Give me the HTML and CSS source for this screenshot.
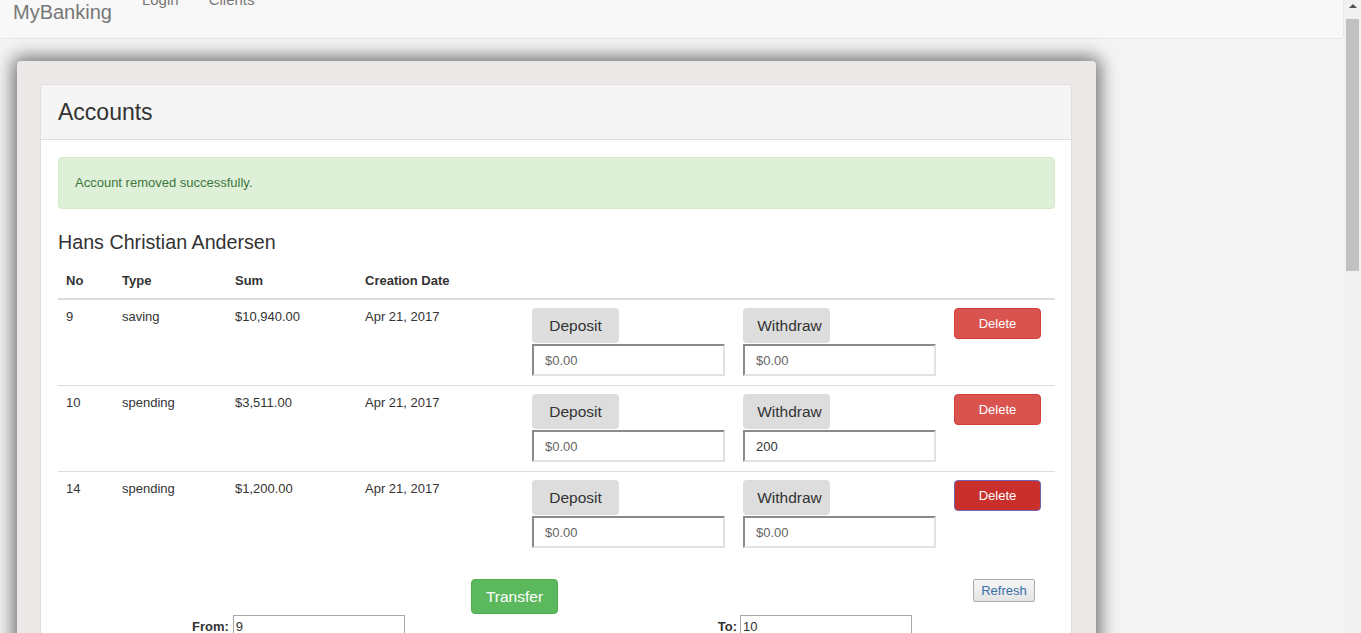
FILE: index.html
```html
<!DOCTYPE html>
<html lang="en">
<head>
<meta charset="utf-8">
<title>MyBanking - Accounts</title>
<link rel="stylesheet" href="styles.css">
</head>
<body>
<div class="page">
  <nav class="navbar">
    <a class="brand" href="#">MyBanking</a>
    <ul class="nav">
      <li><a href="#">Login</a></li>
      <li><a href="#">Clients</a></li>
    </ul>
  </nav>

  <div class="card">
    <div class="panel">
      <div class="panel-heading"><h3>Accounts</h3></div>
      <div class="panel-body">
        <div class="alert">Account removed successfully.</div>
        <h4 class="client">Hans Christian Andersen</h4>
        <table class="accounts">
          <colgroup>
            <col class="c-no"><col class="c-type"><col class="c-sum"><col class="c-date"><col class="c-dep"><col class="c-wd"><col class="c-del">
          </colgroup>
          <thead>
            <tr><th>No</th><th>Type</th><th>Sum</th><th>Creation Date</th><th></th><th></th><th></th></tr>
          </thead>
          <tbody>
            <tr>
              <td>9</td><td>saving</td><td>$10,940.00</td><td>Apr 21, 2017</td>
              <td><button class="btn-op">Deposit</button><input class="amount" placeholder="$0.00"></td>
              <td><button class="btn-op withdraw">Withdraw</button><input class="amount" placeholder="$0.00"></td>
              <td><button class="btn-delete">Delete</button></td>
            </tr>
            <tr>
              <td>10</td><td>spending</td><td>$3,511.00</td><td>Apr 21, 2017</td>
              <td><button class="btn-op">Deposit</button><input class="amount" placeholder="$0.00"></td>
              <td><button class="btn-op withdraw">Withdraw</button><input class="amount" value="200"></td>
              <td><button class="btn-delete">Delete</button></td>
            </tr>
            <tr>
              <td>14</td><td>spending</td><td>$1,200.00</td><td>Apr 21, 2017</td>
              <td><button class="btn-op">Deposit</button><input class="amount" placeholder="$0.00"></td>
              <td><button class="btn-op withdraw">Withdraw</button><input class="amount" placeholder="$0.00"></td>
              <td><button class="btn-delete active">Delete</button></td>
            </tr>
          </tbody>
        </table>
        <div class="actions">
          <button class="btn-transfer">Transfer</button>
          <button class="btn-refresh">Refresh</button>
        </div>
        <div class="fields">
          <label class="field from"><span>From:</span><input class="acct" value="9"></label>
          <label class="field to"><span>To:</span><input class="acct" value="10"></label>
        </div>
      </div>
    </div>
  </div>
</div>
<div class="scrollbar"><div class="arrow"></div><div class="thumb"></div></div>
</body>
</html>
```
FILE: styles.css
```css
html { overflow: hidden; }
body {
  margin: 0;
  background: #f4f4f4;
  font-family: "Liberation Sans", Arial, sans-serif;
  font-size: 13px;
  color: #333;
}
.page { margin-right: 17px; }

.navbar {
  margin-top: -11px;
  height: 50px;
  box-sizing: border-box;
  background: #f8f8f8;
  border: 1px solid #e7e7e7;
  border-left: none;
  border-radius: 0 4px 4px 0;
  display: flex;
  align-items: flex-start;
}
.brand {
  padding: 12px 16px 0 13px;
  font-size: 20px;
  line-height: 20px;
  color: #777;
  text-decoration: none;
}
.nav {
  list-style: none;
  margin: 0;
  padding: 0;
  display: flex;
}
.nav a {
  display: block;
  padding: 0 15px;
  font-size: 15px;
  line-height: 20px;
  color: #777;
  text-decoration: none;
}
.nav li:first-child a { padding-left: 14px; }

.card {
  margin: 22px 0 0 17px;
  width: 1079px;
  box-sizing: border-box;
  background: #ebe8e7;
  border-radius: 4px;
  padding: 23px 24px 23px 23px;
  box-shadow: 0 0 18px 4px rgba(0, 0, 0, 0.55);
}
.panel {
  background: #fff;
  border: 1px solid #ddd;
  border-radius: 4px;
}
.panel-heading {
  background: #f5f5f5;
  border-bottom: 1px solid #ddd;
  border-radius: 3px 3px 0 0;
  padding: 14px 17px 13px;
}
.panel-heading h3 {
  margin: 0;
  font-size: 23px;
  line-height: 27px;
  font-weight: 400;
  color: #333;
}
.panel-body { padding: 17px 16px 20px 17px; }

.alert {
  background: #dff0d8;
  border: 1px solid #d6e9c6;
  color: #3c763d;
  border-radius: 4px;
  padding: 16px;
  line-height: 18px;
}
.client {
  margin: 22px 0 11px;
  font-size: 19.7px;
  line-height: 22px;
  font-weight: 400;
  color: #333;
}

.accounts {
  width: 100%;
  border-collapse: collapse;
  table-layout: fixed;
}
.c-no { width: 56px; }
.c-type { width: 113px; }
.c-sum { width: 130px; }
.c-date { width: 167px; }
.c-dep { width: 211px; }
.c-wd { width: 211px; }
.c-del { width: 109px; }
.accounts th {
  text-align: left;
  padding: 8px;
  line-height: 18px;
  font-weight: 700;
  border-bottom: 2px solid #ddd;
  vertical-align: bottom;
}
.accounts td {
  padding: 8px 8px 9px;
  line-height: 18px;
  vertical-align: top;
  border-top: 1px solid #ddd;
}
.accounts tbody tr:first-child td { border-top: none; }

.btn-op {
  display: block;
  width: 87px;
  height: 35px;
  margin-bottom: 1px;
  padding: 0;
  border: none;
  border-radius: 4px;
  background: #ddd;
  color: #333;
  font-family: "Liberation Sans", Arial, sans-serif;
  font-size: 15.5px;
}
.btn-op.withdraw { padding-left: 6px; }
.amount {
  display: block;
  width: 193px;
  height: 32px;
  box-sizing: border-box;
  margin: 0;
  padding: 0 10px 0 11px;
  border: 2px solid;
  border-color: #8a8a8a #e2e2e2 #e2e2e2 #8a8a8a;
  background: #fff;
  font-family: "Liberation Sans", Arial, sans-serif;
  font-size: 13px;
  color: #333;
}
.amount::placeholder { color: #666; }

.btn-delete {
  display: block;
  width: 87px;
  height: 31px;
  padding: 0;
  border: 1px solid #d43f3a;
  border-radius: 4px;
  background: #d9534f;
  color: #fff;
  font-family: "Liberation Sans", Arial, sans-serif;
  font-size: 13px;
}
.btn-delete.active {
  background: #c9302c;
  border-color: #6f66b0;
}

.actions {
  display: flex;
  align-items: flex-start;
  margin-top: 22px;
}
.btn-transfer {
  margin-left: 413px;
  width: 87px;
  height: 35px;
  padding: 0;
  border: 1px solid #4cae4c;
  border-radius: 4px;
  background: #5cb85c;
  color: #fff;
  font-family: "Liberation Sans", Arial, sans-serif;
  font-size: 15.5px;
}
.btn-refresh {
  margin-left: auto;
  margin-right: 20px;
  width: 62px;
  height: 23px;
  padding: 0;
  border: 1px solid #adadad;
  border-radius: 2px;
  background: linear-gradient(#f6f6f6, #e4e4e4);
  color: #3a6ea8;
  font-family: "Liberation Sans", Arial, sans-serif;
  font-size: 13px;
}

.fields {
  display: flex;
  align-items: center;
  margin-top: 1px;
}
.field {
  display: flex;
  align-items: center;
  font-weight: 700;
}
.field.from { margin-left: 134px; }
.field.from span { margin-right: 4px; }
.field.to { margin-left: 313px; }
.field.to span { margin-right: 3px; }
.acct {
  width: 172px;
  height: 22px;
  box-sizing: border-box;
  margin: 0;
  padding: 1px 2px;
  border: 1px solid #a9a9a9;
  font-family: "Liberation Sans", Arial, sans-serif;
  font-size: 13px;
  font-weight: 400;
  color: #333;
}

.scrollbar {
  position: fixed;
  top: 0;
  right: 0;
  width: 17px;
  height: 100%;
  background: #f1f1f1;
}
.scrollbar .arrow {
  margin: 4px auto 0;
  width: 0;
  height: 0;
  border-left: 4px solid transparent;
  border-right: 4px solid transparent;
  border-bottom: 4px solid #505050;
}
.scrollbar .thumb {
  margin: 11px 0 0 2px;
  width: 13px;
  height: 252px;
  background: #c1c1c1;
}
```
